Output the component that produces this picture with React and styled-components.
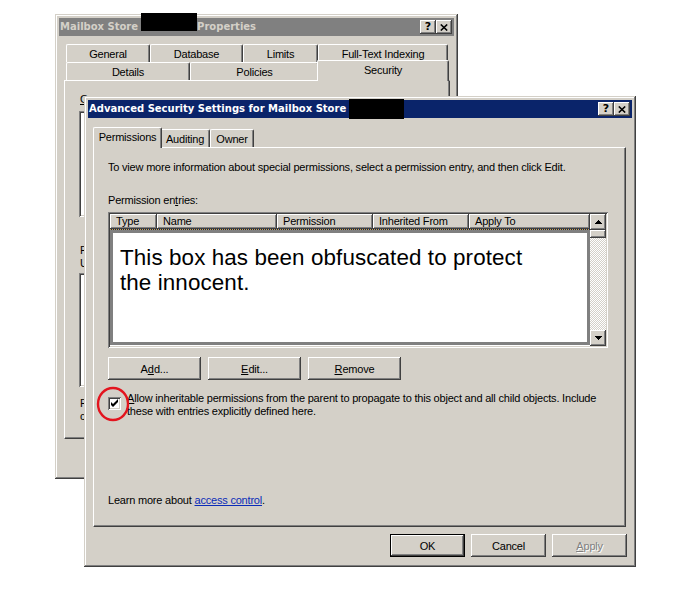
import React from 'react';
import styled, { createGlobalStyle } from 'styled-components';

const FACE = '#d4d0c8';
const SHADOW = '#808080';
const DARK = '#404040';

const raisedButton = `box-shadow: inset -1px -1px ${DARK}, inset 1px 1px #fff, inset -2px -2px ${SHADOW};`;
const sunkenField = `box-shadow: inset 1px 1px ${SHADOW}, inset -1px -1px #fff, inset 2px 2px ${DARK}, inset -2px -2px ${FACE};`;

const GlobalStyle = createGlobalStyle`
  * { box-sizing: border-box; }
  body {
    margin: 0;
    background: #fff;
    color: #000;
    font-family: "Liberation Sans", Arial, sans-serif;
    font-size: 11px;
    letter-spacing: -0.2px;
  }
`;

const Desktop = styled.div`
  position: relative;
  width: 680px;
  height: 590px;
  overflow: hidden;
  background: #fff;
`;

// windows sit on a free desktop, so their place is the content
const Window = styled.div`
  position: absolute;
  left: ${({ $x }) => $x}px;
  top: ${({ $y }) => $y}px;
  width: ${({ $w }) => $w}px;
  height: ${({ $h }) => $h}px;
  padding: 4px;
  display: flex;
  flex-direction: column;
  background: ${FACE};
  box-shadow: inset -1px -1px ${DARK}, inset 1px 1px ${FACE}, inset -2px -2px ${SHADOW}, inset 2px 2px #fff;
`;

const TitleBar = styled.div`
  flex: none;
  height: 18px;
  display: flex;
  align-items: center;
  padding: 0 2px 1px 1px;
  background: ${({ $active }) => ($active ? '#0a246a' : '#808080')};
  color: ${({ $active }) => ($active ? '#fff' : FACE)};
  font-family: "DejaVu Sans", Verdana, sans-serif;
  font-weight: 700;
  font-size: 10px;
  letter-spacing: 0;
  white-space: nowrap;
`;

const Redacted = styled.span`
  align-self: flex-start;
  flex: none;
  width: ${({ $w }) => $w}px;
  height: ${({ $h }) => $h}px;
  margin: ${({ $top }) => $top}px 0 0 3px;
  background: #000;
`;

const CaptionButtons = styled.div`
  margin-left: auto;
  display: flex;
  margin-bottom: -1px;
`;

const CaptionButton = styled.div`
  width: 16px;
  height: 14px;
  display: flex;
  align-items: center;
  justify-content: center;
  background: ${FACE};
  color: #000;
  font-family: "DejaVu Sans", Verdana, sans-serif;
  font-weight: 700;
  font-size: 11px;
  line-height: 14px;
  ${raisedButton}
`;

const WindowBody = styled.div`
  flex: 1;
  display: flex;
  flex-direction: column;
  padding: ${({ $pad }) => $pad};
`;

const TabStrip = styled.div`
  flex: none;
  height: ${({ $h }) => $h || 18}px;
  display: flex;
  align-items: flex-end;
  padding-left: 2px;
`;

const Tab = styled.div`
  position: relative;
  z-index: ${({ $selected }) => ($selected ? 2 : 1)};
  flex: none;
  width: ${({ $w, $selected }) => $w + ($selected ? 4 : 0)}px;
  height: ${({ $selected }) => ($selected ? 21 : 18)}px;
  margin: 0 ${({ $selected }) => ($selected ? -2 : 0)}px ${({ $selected }) => ($selected ? -1 : 0)}px;
  padding-bottom: ${({ $selected }) => ($selected ? 2 : 0)}px;
  display: flex;
  align-items: center;
  justify-content: center;
  background: ${FACE};
  border: 1px solid #fff;
  border-right-color: ${DARK};
  border-bottom: none;
  border-radius: 2px 2px 0 0;
  box-shadow: inset -1px 0 ${SHADOW};
  white-space: nowrap;
`;

const TabPanel = styled.div`
  height: ${({ $h }) => $h}px;
  flex: none;
  display: flex;
  flex-direction: column;
  padding: ${({ $pad }) => $pad};
  background: ${FACE};
  border: 1px solid #fff;
  border-right-color: ${DARK};
  border-bottom-color: ${DARK};
  box-shadow: inset -1px -1px ${SHADOW};
`;

const Text = styled.div`
  line-height: 13px;
  margin-top: ${({ $mt }) => ($mt === undefined ? '0' : $mt === 'auto' ? 'auto' : `${$mt}px`)};
  white-space: nowrap;
`;

const Mn = styled.span`
  letter-spacing: 0;
  text-decoration: underline;
  text-underline-offset: 1px;
`;

const Link = styled.span`
  color: #0a2cb8;
  text-decoration: underline;
  text-underline-offset: 1px;
`;

const SunkenList = styled.div`
  width: ${({ $w }) => $w}px;
  height: ${({ $h }) => $h}px;
  margin: ${({ $mt }) => $mt}px 0 0 -1px;
  background: #fff;
  ${sunkenField}
`;

const ListView = styled.div`
  width: 500px;
  height: 136px;
  margin-top: 5px;
  padding: 2px;
  display: grid;
  grid-template-columns: 1fr 16px;
  background: #fff;
  ${sunkenField}
`;

const ListMain = styled.div`
  display: flex;
  flex-direction: column;
  min-width: 0;
`;

const HeaderRow = styled.div`
  display: flex;
  height: 15px;
  flex: none;
`;

const HeaderCell = styled.div`
  flex: ${({ $w }) => ($w ? `0 0 ${$w}px` : '1')};
  padding-left: 6px;
  line-height: 15px;
  background: ${FACE};
  white-space: nowrap;
  overflow: hidden;
  ${raisedButton}
`;

const FocusLine = styled.div`
  height: 1px;
  flex: none;
  background: repeating-linear-gradient(90deg, #d8a838 0 1px, #0a246a 1px 2px);
`;

const Obscured = styled.div`
  height: 115px;
  flex: none;
  padding: 12px 0 0 7px;
  border: 3px solid #808080;
  background: #fff;
  font-size: 22.4px;
  line-height: 25px;
  letter-spacing: 0.1px;
`;

const ScrollBar = styled.div`
  display: flex;
  flex-direction: column;
`;

const ScrollButton = styled.div`
  flex: none;
  height: ${({ $h }) => $h || 16}px;
  display: flex;
  align-items: center;
  justify-content: center;
  background: ${FACE};
  ${raisedButton}
`;

const ScrollTrack = styled.div`
  flex: 1;
  background-color: #fff;
  background-image: repeating-conic-gradient(${FACE} 0 25%, #fff 0 50%);
  background-size: 2px 2px;
`;

const ButtonRow = styled.div`
  display: flex;
  gap: ${({ $gap }) => $gap}px;
  margin-top: ${({ $mt }) => $mt || 0}px;
  justify-content: ${({ $end }) => ($end ? 'flex-end' : 'flex-start')};
  margin-right: ${({ $mr }) => $mr || 0}px;
`;

const PushButton = styled.div`
  width: ${({ $w }) => $w}px;
  height: 23px;
  display: flex;
  align-items: center;
  justify-content: center;
  background: ${FACE};
  color: ${({ $disabled }) => ($disabled ? SHADOW : '#000')};
  text-shadow: ${({ $disabled }) => ($disabled ? '1px 1px #fff' : 'none')};
  border: ${({ $default }) => ($default ? '1px solid #000' : 'none')};
  ${raisedButton}
`;

const CheckRow = styled.div`
  display: flex;
  gap: 6px;
  margin-top: 12px;
`;

const CheckBox = styled.div`
  flex: none;
  width: 13px;
  height: 13px;
  margin-top: 5px;
  background: #fff;
  ${sunkenField}
`;

const Highlight = styled.svg`
  position: absolute;
  left: 96px;
  top: 386px;
  pointer-events: none;
`;

const Arrow = ({ down }) => (
  <svg width="7" height="4" viewBox="0 0 7 4" shapeRendering="crispEdges">
    <polygon points={down ? '0,0 7,0 3.5,4' : '3.5,0 7,4 0,4'} fill="#000" />
  </svg>
);

const Caption = () => (
  <CaptionButtons>
    <CaptionButton>?</CaptionButton>
    <CaptionButton>
      <svg width="8" height="7" viewBox="0 0 8 7">
        <path d="M0.8 0.5 L7.2 6.5 M7.2 0.5 L0.8 6.5" stroke="#000" strokeWidth="1.6" />
      </svg>
    </CaptionButton>
  </CaptionButtons>
);

const backRowOne = [
  ['General', 84],
  ['Database', 93],
  ['Limits', 75],
  ['Full-Text Indexing', 130],
];

const backRowTwo = [
  ['Details', 124],
  ['Policies', 129],
  ['Security', 128, true],
];

const columns = [
  ['Type', 47],
  ['Name', 120],
  ['Permission', 96],
  ['Inherited From', 96],
  ['Apply To'],
];

const PropertiesWindow = () => (
  <Window $x={55} $y={14} $w={403} $h={465}>
    <TitleBar>
      Mailbox Store
      <Redacted $w={56} $h={18} $top={-5} />
      Properties
      <Caption />
    </TitleBar>
    <WindowBody $pad="8px 4px 6px 5px">
      <TabStrip>
        {backRowOne.map(([label, w]) => (
          <Tab key={label} $w={w}>{label}</Tab>
        ))}
      </TabStrip>
      <TabStrip>
        {backRowTwo.map(([label, w, selected]) => (
          <Tab key={label} $w={w} $selected={selected}>{label}</Tab>
        ))}
      </TabStrip>
      <TabPanel $h={359} $pad="12px 14px 0 15px">
        <Text><Mn>G</Mn>roup or user names:</Text>
        <SunkenList $w={355} $h={106} $mt={5} />
        <Text $mt={27}>Permissions for<br />Users</Text>
        <SunkenList $w={355} $h={114} $mt={3} />
        <Text $mt={10}>For special permissions or for advanced settings,<br />click Advanced.</Text>
      </TabPanel>
      <ButtonRow $gap={6} $mt={7} $end>
        <PushButton $w={75} $default>OK</PushButton>
        <PushButton $w={75}>Cancel</PushButton>
        <PushButton $w={75} $disabled>Apply</PushButton>
      </ButtonRow>
    </WindowBody>
  </Window>
);

const AdvancedWindow = () => (
  <Window $x={84} $y={96} $w={552} $h={471}>
    <TitleBar $active>
      Advanced Security Settings for Mailbox Store
      <Redacted $w={55} $h={20} $top={-1} />
      <Caption />
    </TitleBar>
    <WindowBody $pad="9px 6px 6px 5px">
      <TabStrip $h={20}>
        <Tab $w={65} $selected>Permissions</Tab>
        <Tab $w={50}>Auditing</Tab>
        <Tab $w={44}>Owner</Tab>
      </TabStrip>
      <TabPanel $h={380} $pad="13px 15px 19px 14px">
        <Text>
          To view more information about special permissions, select a permission entry, and then click Edit.
        </Text>
        <Text $mt={20}>Permission en<Mn>t</Mn>ries:</Text>
        <ListView>
          <ListMain>
            <HeaderRow>
              {columns.map(([label, w]) => (
                <HeaderCell key={label} $w={w}>{label}</HeaderCell>
              ))}
            </HeaderRow>
            <FocusLine />
            <Obscured>
              This box has been obfuscated to protect
              <br />
              the innocent.
            </Obscured>
          </ListMain>
          <ScrollBar>
            <ScrollButton><Arrow /></ScrollButton>
            <ScrollButton $h={8} />
            <ScrollTrack />
            <ScrollButton><Arrow down /></ScrollButton>
          </ScrollBar>
        </ListView>
        <ButtonRow $gap={7} $mt={9}>
          <PushButton $w={93}>A<Mn>d</Mn>d...</PushButton>
          <PushButton $w={93}><Mn>E</Mn>dit...</PushButton>
          <PushButton $w={93}><Mn>R</Mn>emove</PushButton>
        </ButtonRow>
        <CheckRow>
          <CheckBox>
            <svg width="9" height="9" viewBox="0 0 9 9" style={{ margin: 2, display: 'block' }}>
              <path d="M1 3 L3 5 L8 0 L8 3 L3 8 L1 6 Z" fill="#000" />
            </svg>
          </CheckBox>
          <Text>
            <Mn>A</Mn>llow inheritable permissions from the parent to propagate to this object and all child objects. Include
            <br />
            these with entries explicitly defined here.
          </Text>
        </CheckRow>
        <Text $mt="auto">
          Learn more about <Link>access control</Link>.
        </Text>
      </TabPanel>
      <ButtonRow $gap={6} $mt={7} $mr={-1} $end>
        <PushButton $w={75} $default>OK</PushButton>
        <PushButton $w={75}>Cancel</PushButton>
        <PushButton $w={75} $disabled><Mn>A</Mn>pply</PushButton>
      </ButtonRow>
    </WindowBody>
  </Window>
);

export default function App() {
  return (
    <>
      <GlobalStyle />
      <Desktop>
        <PropertiesWindow />
        <AdvancedWindow />
        <Highlight width="36" height="38" viewBox="0 0 36 38">
          <ellipse cx="17" cy="18" rx="15" ry="16" fill="none" stroke="#e3141e" strokeWidth="2.4" />
        </Highlight>
      </Desktop>
    </>
  );
}
